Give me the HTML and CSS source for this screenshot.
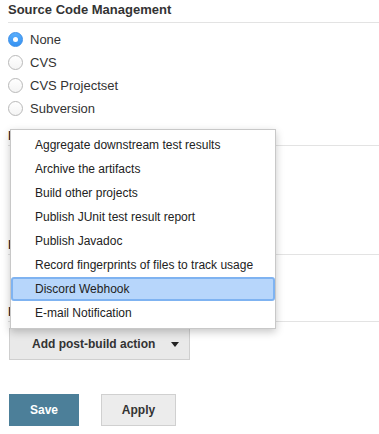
FILE: index.html
```html
<!DOCTYPE html>
<html>
<head>
<meta charset="utf-8">
<link rel="stylesheet" href="styles.css">
</head>
<body>
<div class="page">
  <div class="section-title first">Source Code Management</div>
  <div class="radios">
    <div class="radio-row"><span class="radio checked"></span><span>None</span></div>
    <div class="radio-row"><span class="radio"></span><span>CVS</span></div>
    <div class="radio-row"><span class="radio"></span><span>CVS Projectset</span></div>
    <div class="radio-row"><span class="radio"></span><span>Subversion</span></div>
  </div>
  <div class="section-title">Build Triggers</div>
  <div class="spacer-a"></div>
  <div class="section-title">Build Environment</div>
  <div class="spacer-b"></div>
  <div class="section-title">Post-build Actions</div>
  <div class="add-row">
    <button class="btn add-btn"><span>Add post-build action</span><span class="caret"></span></button>
  </div>
  <div class="actions">
    <button class="btn save">Save</button>
    <button class="btn apply">Apply</button>
  </div>

  <ul class="menu">
    <li>Aggregate downstream test results</li>
    <li>Archive the artifacts</li>
    <li>Build other projects</li>
    <li>Publish JUnit test result report</li>
    <li>Publish Javadoc</li>
    <li>Record fingerprints of files to track usage</li>
    <li class="active">Discord Webhook</li>
    <li>E-mail Notification</li>
  </ul>
</div>
</body>
</html>
```
FILE: styles.css
```css
* { box-sizing: border-box; }
html, body { margin: 0; padding: 0; background: #fff; }
body {
  font-family: "Liberation Sans", Arial, Helvetica, sans-serif;
  color: #333;
  font-size: 13px;
  width: 379px;
  height: 434px;
  overflow: hidden;
}
.page {
  position: relative;
  padding-left: 8px;
}
.section-title {
  font-weight: bold;
  font-size: 13px;
  line-height: 16px;
  padding-top: 7px;
  padding-bottom: 1px;
  border-bottom: 1px solid #e3e3e3;
  color: #333;
}
.section-title.first { padding-top: 2px; padding-bottom: 4px; }
.radios {
  padding-top: 5px;
  padding-bottom: 1px;
  display: flex;
  flex-direction: column;
}
.radio-row {
  display: flex;
  align-items: center;
  height: 23px;
  gap: 7px;
  line-height: 16px;
}
.radio {
  width: 15px;
  height: 15px;
  border-radius: 50%;
  border: 1px solid #b9b9b9;
  background: linear-gradient(#fff, #f4f4f4);
  display: inline-block;
  flex: none;
  position: relative;
}
.radio.checked {
  border-color: #3a8ee8;
  background: linear-gradient(#5aaefc, #3592f2);
}
.radio.checked::after {
  content: "";
  position: absolute;
  width: 5px;
  height: 5px;
  border-radius: 50%;
  background: #fff;
  left: 4px;
  top: 4px;
}
.spacer-a { height: 84px; }
.spacer-b { height: 42px; }
.add-row { padding-top: 6px; }
.btn {
  font-family: "Liberation Sans", Arial, Helvetica, sans-serif;
  font-weight: bold;
  font-size: 12px;
  color: #333;
  border: 1px solid #cfcfcf;
  background: #e9e9e9;
  height: 32px;
  margin: 0;
  padding: 0;
  border-radius: 0;
}
.add-btn {
  margin-left: 1px;
  width: 181px;
  display: flex;
  align-items: center;
  padding-left: 22px;
  padding-right: 10px;
  justify-content: space-between;
}
.caret {
  width: 0;
  height: 0;
  border-left: 4px solid transparent;
  border-right: 4px solid transparent;
  border-top: 5px solid #222;
}
.actions {
  display: flex;
  gap: 22px;
  margin-top: 34px;
  margin-left: 1px;
}
.save {
  width: 70px;
  background: #4c7f99;
  border-color: #4c7f99;
  color: #fff;
}
.apply {
  width: 75px;
  background: #ececec;
  border-color: #d0d0d0;
}
.menu {
  position: absolute;
  left: 10px;
  top: 129px;
  width: 266px;
  margin: 0;
  padding: 3px 0 3px;
  list-style: none;
  background: #fff;
  border: 1px solid #c8c8c8;
  box-shadow: 0 3px 8px rgba(0,0,0,0.22);
  z-index: 2;
}
.menu li {
  height: 24px;
  line-height: 20px;
  padding: 0 0 0 24px;
  font-size: 12px;
  color: #222;
  white-space: nowrap;
  border: 2px solid transparent;
  border-left-width: 0;
  border-right-width: 0;
}
.menu li.active {
  background: #b7d6fb;
  border: 2px solid #7fb3f1;
  border-radius: 3px;
  padding-left: 22px;
}
```
